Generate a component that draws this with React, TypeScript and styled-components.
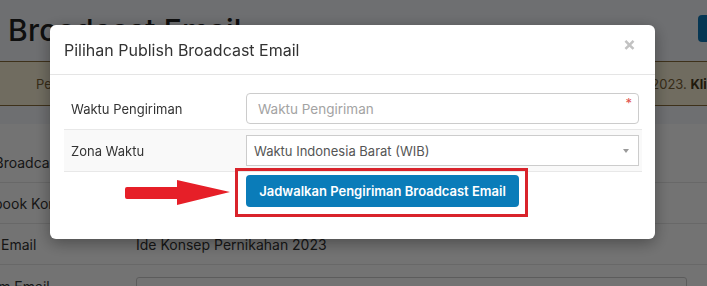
import styled, { createGlobalStyle } from "styled-components";

const Global = createGlobalStyle`
  html, body {
    margin: 0;
    padding: 0;
    width: 707px;
    height: 286px;
    overflow: hidden;
    background: #f4f6fa;
    font-family: Inter, "Open Sans", sans-serif;
  }
`;

const Page = styled.div`
  width: 707px;
  height: 286px;
  overflow: hidden;
`;

const PageHead = styled.div`
  display: flex;
  justify-content: space-between;
  height: 61px;
  padding-left: 8px;
`;

const PageTitle = styled.h1`
  margin: 0;
  padding-top: 12px;
  font-size: 30px;
  font-weight: 500;
  color: #222;
  letter-spacing: 0.2px;
`;

const TopButton = styled.div`
  flex-shrink: 0;
  width: 40px;
  height: 27px;
  margin: 15px -31px 0 0;
  background: #0f78b8;
  border-radius: 4px 0 0 4px;
`;

const Alert = styled.div`
  height: 43px;
  border-top: 1px solid #8a6d3b;
  border-bottom: 1px solid #8a6d3b;
  background: #f8f0d6;
  color: #7a6135;
  font-size: 13px;
  display: flex;
  align-items: center;
  padding-left: 36px;
  white-space: nowrap;
  overflow: hidden;
  b {
    color: #4a3a1c;
  }
`;

const Card = styled.div`
  margin-top: 18px;
  background: #fff;
  padding-top: 18px;
  margin-left: -48px;
`;

const InfoRow = styled.div`
  display: grid;
  grid-template-columns: 184px 1fr;
  align-items: center;
  height: 40px;
  border-bottom: 1px solid #e6e6e6;
  font-size: 14px;
  color: #333;
`;

const FakeInput = styled.div`
  height: 28px;
  margin-top: 12px;
  border: 1px solid #ccc;
  border-radius: 3px;
  margin-right: 20px;
`;

const Overlay = styled.div`
  position: fixed;
  inset: 0;
  background: rgba(0, 0, 0, 0.55);
  padding: 25px 0 0 50px;
`;

const Modal = styled.div`
  width: 605px;
  background: #fff;
  border-radius: 6px;
  box-shadow: 0 4px 16px rgba(0, 0, 0, 0.35);
  overflow: hidden;
`;

const ModalHeader = styled.div`
  display: flex;
  justify-content: space-between;
  align-items: center;
  height: 49px;
  padding: 0 14px;
  border-bottom: 1px solid #e5e5e5;
`;

const ModalTitle = styled.div`
  font-size: 16px;
  color: #333;
  padding-top: 1px;
`;

const Close = styled.span`
  font-size: 19px;
  font-weight: 700;
  color: #c2c2c2;
  line-height: 1;
  margin-right: 5px;
  margin-top: -10px;
`;

const ModalBody = styled.div`
  padding: 13px 14px 22px;
`;

const Table = styled.div`
  width: 578px;
`;

const Row = styled.div<{ $striped?: boolean }>`
  display: grid;
  grid-template-columns: 182px 1fr;
  align-items: center;
  padding: 5px 3px 5px 0;
  border-top: 1px solid #e8e8e8;
  background: ${(p) => (p.$striped ? "#f9f9f9" : "#fff")};
  &:first-child {
    border-top: none;
  }
  &:last-child {
    border-bottom: 1px solid #e8e8e8;
  }
`;

const Label = styled.div`
  padding-left: 7px;
  font-size: 13px;
  color: #333;
`;

const Field = styled.div`
  position: relative;
  height: 29px;
  border: 1px solid #ccc;
  border-radius: 4px;
  background: #fff;
  display: flex;
  align-items: center;
  padding-left: 11px;
  font-size: 13.5px;
  color: #a3a3a3;
`;

const SelectField = styled(Field)`
  border-radius: 0;
  padding-left: 7px;
  color: #555;
  font-size: 13px;
  justify-content: space-between;
`;

const Required = styled.span`
  position: absolute;
  right: 6px;
  top: 1px;
  font-size: 13px;
  color: #e0504a;
`;

const Caret = styled.span`
  width: 0;
  height: 0;
  margin-right: 9px;
  border-left: 3.5px solid transparent;
  border-right: 3.5px solid transparent;
  border-top: 4px solid #9a9a9a;
`;

const ActionRow = styled.div`
  display: grid;
  grid-template-columns: 171px auto;
  align-items: center;
  margin-top: -4px;
`;

const ArrowCell = styled.div`
  display: flex;
  justify-content: flex-end;
  padding-right: 5px;
  padding-top: 1px;
`;

const Highlight = styled.div`
  justify-self: start;
  border: 3px solid #d9232b;
  padding: 4px 6px 7px 8px;
`;

const PrimaryButton = styled.button`
  height: 32px;
  width: 273px;
  border: none;
  border-radius: 4px;
  background: #0a7cb9;
  color: #fff;
  font-family: Inter, "Open Sans", sans-serif;
  font-size: 13px;
  font-weight: 600;
  cursor: pointer;
`;

const Arrow = () => (
  <svg width="105" height="26" viewBox="0 0 105 26">
    <path d="M2 7 H52 V0 L105 12 L52 25 V19 H2 Q0 19 0 17 V9 Q0 7 2 7 Z" fill="#e61f28" />
  </svg>
);

export default function App() {
  return (
    <>
      <Global />
      <Page>
        <PageHead>
          <PageTitle>Broadcast Email</PageTitle>
          <TopButton />
        </PageHead>
        <Alert>
          Pesan broadcast email baru Anda telah disimpan sebagai draft dengan judul Ide Konsep Pernikahan&nbsp;2023.&nbsp;<b>Klik di sini</b>
        </Alert>
        <Card>
          <InfoRow>
            <span>Nama Broadcast</span>
            <span>Ide Konsep Pernikahan</span>
          </InfoRow>
          <InfoRow>
            <span>Phonebook Kontak</span>
            <span>Undangan Pernikahan</span>
          </InfoRow>
          <InfoRow>
            <span>Subjek Email</span>
            <span>Ide Konsep Pernikahan 2023</span>
          </InfoRow>
          <InfoRow>
            <span>Pengirim Email</span>
            <FakeInput />
          </InfoRow>
        </Card>
      </Page>
      <Overlay>
        <Modal>
          <ModalHeader>
            <ModalTitle>Pilihan Publish Broadcast Email</ModalTitle>
            <Close>×</Close>
          </ModalHeader>
          <ModalBody>
            <Table>
              <Row>
                <Label>Waktu Pengiriman</Label>
                <Field>
                  Waktu Pengiriman
                  <Required>*</Required>
                </Field>
              </Row>
              <Row $striped>
                <Label>Zona Waktu</Label>
                <SelectField>
                  Waktu Indonesia Barat (WIB)
                  <Caret />
                </SelectField>
              </Row>
            </Table>
            <ActionRow>
              <ArrowCell>
                <Arrow />
              </ArrowCell>
              <Highlight>
                <PrimaryButton>Jadwalkan Pengiriman Broadcast Email</PrimaryButton>
              </Highlight>
            </ActionRow>
          </ModalBody>
        </Modal>
      </Overlay>
    </>
  );
}
